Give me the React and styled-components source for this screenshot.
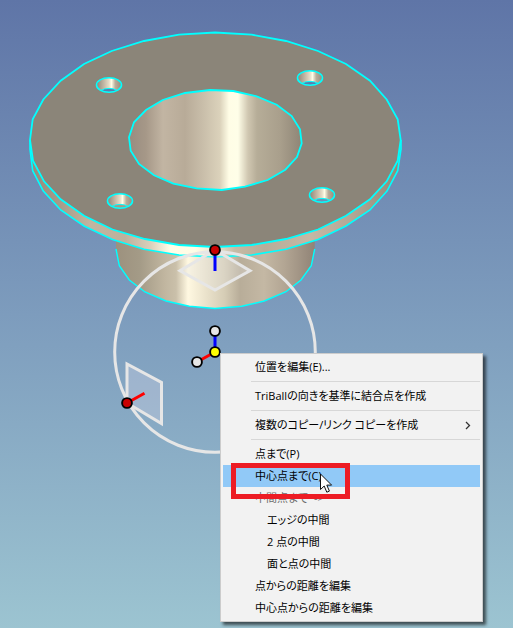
import React from 'react';
import styled, { createGlobalStyle } from 'styled-components';

const GlobalStyle = createGlobalStyle`
  body {
    margin: 0;
    font-family: 'Noto Sans CJK JP', sans-serif;
  }
`;

const Viewport = styled.main`
  position: relative;
  min-height: 100vh;
  overflow: hidden;
  background: linear-gradient(#5f75a7 0%, #7d9cbd 50%, #9cc4d1 100%);
`;

const Scene = styled.svg`
  display: block;
`;

const Menu = styled.div`
  position: absolute;
  left: 220px;
  top: 353px;
  box-sizing: border-box;
  min-width: 263px;
  padding: 2px;
  display: flex;
  flex-direction: column;
  background: #f2f2f2;
  border: 1px solid #cccccc;
  box-shadow: 3px 3px 3px rgba(0, 0, 0, 0.6);
`;

const Item = styled.button`
  display: flex;
  align-items: center;
  justify-content: space-between;
  height: 22px;
  padding: 0 9px 0 ${(p) => (p.$nested ? 44 : 32)}px;
  border: 0;
  background: ${(p) => (p.$active ? '#91c9f7' : 'transparent')};
  color: #000;
  font-family: 'Open Sans', 'Noto Sans CJK JP', sans-serif;
  font-size: 11px;
  line-height: 22px;
  font-feature-settings: 'palt';
  text-align: left;
  white-space: pre;

  &:disabled {
    color: #6d6d6d;
  }
`;

const Separator = styled.hr`
  height: 1px;
  margin: 3px 0 3px 28px;
  border: 0;
  background: #d7d7d7;
`;

const Callout = styled.div`
  position: absolute;
  left: 10px;
  top: 109px;
  box-sizing: border-box;
  width: 119px;
  height: 36px;
  border: 5px solid #ed1c24;
  pointer-events: none;
`;

const Pointer = styled.svg`
  position: absolute;
  left: 99px;
  top: 119px;
  pointer-events: none;
`;

const TOP_FACE =
  '215,32.5 251.7,34.7 286,41 318,51 346,64 370,80.7 386.7,99.5 397.7,119.3 400.7,140 397.7,160.7 386.7,181.3 370,199.3 346,215.7 318,229.5 286,239 251.7,245 215,247 179,245 145,239 112.5,229.5 84,215.7 60.7,199.3 44,181.3 33,160.7 30,140 32.7,119.3 43.3,99.5 60.7,80.7 84,64 111.7,51 144,41 179,34.7';
const RIM =
  '30,140 30,149.3 32.7,170.7 43.3,191 60.7,210 84,226 112.5,239.5 144,249.3 179,255 215,257 251.7,255 286,249.3 318,239.5 346,226 370,210 387,191 397.7,170.7 401,149.3 401,140';
const BORE =
  '129,137.3 134,122.3 146,110 162.7,100 185,93 210,90 233.3,91 256.7,96.3 276.7,104.7 291.7,116 300,129.3 301.7,143.3 297,157 285.3,169.7 267.7,180 245,186.7 221.7,190 196.7,188.3 173.3,183.7 154,175.3 139,164 130.7,150.7';
const BOSS =
  '116,249 119.3,265.7 129.3,280 145,292 166,301 189.3,306.3 215,308.5 241.7,306.3 264.3,301 286,291.7 301,280 311.3,265.7 314.7,249';

const GRADIENTS = [
  ['bore', 129, 302, [[129, '#988c80'], [146, '#a69888'], [163, '#c2b5a3'], [185, '#b8ab98'], [202, '#c8bda9'], [220, '#dbd2bb'], [229, '#fffde6'], [238, '#fffee8'], [248, '#d0c7b1'], [257, '#b6ad98'], [280, '#a99f8c'], [302, '#8e8576']]],
  ['boss', 116, 315, [[116, '#9c917e'], [140, '#a49b87'], [164, '#c0b59f'], [176, '#cac0aa'], [188, '#fff8e1'], [208, '#e8e0c9'], [225, '#d5ccb5'], [240, '#b8ad99'], [264, '#c4b8a4'], [285, '#b2a593'], [315, '#908376']]],
  ['rim', 30, 401, [[30, '#95897b'], [60, '#a79b89'], [90, '#c0b5a0'], [125, '#bdb19d'], [150, '#d8cfba'], [170, '#fffde7'], [195, '#fffce5'], [215, '#eee5d0'], [235, '#c5baa5'], [265, '#b8ad99'], [310, '#c5b8a5'], [350, '#b4a896'], [401, '#918777']]],
];

const HOLES = [
  { x: 109, y: 85, tint: '#5f7aac' },
  { x: 310, y: 78, tint: '#5f7aac' },
  { x: 120, y: 201, tint: '#a59b89' },
  { x: 322, y: 195, tint: '#7090b5' },
];

function Hole({ x, y, tint }) {
  return (
    <g transform={`translate(${x} ${y})`}>
      <ellipse rx="12.5" ry="7.2" fill="url(#hole)" />
      <path d="M-8 5.4 Q-5 3.4 0 3.4 Q5 3.4 8 5.4 Q5 7 0 7 Q-5 7 -8 5.4Z" fill={tint} />
      <path d="M-8 5.4 Q-5 3.4 0 3.4 Q5 3.4 8 5.4" fill="none" stroke="#0ff" strokeWidth="1" />
      <ellipse rx="12.5" ry="7.2" fill="none" stroke="#0ff" strokeWidth="1.6" />
    </g>
  );
}

function Handle({ x, y, color }) {
  return <circle cx={x} cy={y} r="4.9" fill={color} stroke="#000" strokeWidth="1.9" />;
}

function FlangeModel() {
  return (
    <Scene width="420" height="460" viewBox="0 0 420 460" role="img" aria-label="TriBall">
      <defs>
        {GRADIENTS.map(([id, from, to, stops]) => (
          <linearGradient key={id} id={id} gradientUnits="userSpaceOnUse" x1={from} x2={to} y1="0" y2="0">
            {stops.map(([x, color]) => (
              <stop key={x} offset={(x - from) / (to - from)} stopColor={color} />
            ))}
          </linearGradient>
        ))}
        <linearGradient id="hole">
          <stop offset="0" stopColor="#8e8478" />
          <stop offset=".3" stopColor="#c4b8a5" />
          <stop offset=".5" stopColor="#e5dcc7" />
          <stop offset=".6" stopColor="#fffde6" />
          <stop offset=".75" stopColor="#b9ae9b" />
          <stop offset="1" stopColor="#968b7b" />
        </linearGradient>
      </defs>
      <polygon points={`116,230 ${BOSS} 314.7,230`} fill="url(#boss)" />
      <polyline points={BOSS} fill="none" stroke="#0ff" strokeWidth="1.4" />
      <polygon points={RIM} fill="url(#rim)" />
      <polyline points={RIM} fill="none" stroke="#0ff" strokeWidth="1.6" />
      <polygon points={TOP_FACE} fill="#8b8579" stroke="#0ff" strokeWidth="1.8" />
      <polygon points={BORE} fill="url(#bore)" stroke="#0ff" strokeWidth="1.8" />
      {HOLES.map((h) => <Hole key={h.x} {...h} />)}
      <g stroke="#e6e6e6" strokeWidth="3">
        <circle cx="215" cy="352" r="100.3" fill="none" />
        <path d="M215 250 L250 270.7 L215 290 L180 270.7Z" fill="#e6e6e6" fillOpacity=".3" />
        <path d="M127 403 V364 L161.5 382.5 V423.5Z" fill="#c8cee2" fillOpacity=".4" />
      </g>
      <g fill="none" strokeWidth="3">
        <path d="M215 250 V271 M215 331 V352" stroke="#00f" />
        <path d="M127 403 L144.5 393.3 M197 362 L215 352" stroke="#f00" />
      </g>
      <Handle x={215} y={250} color="#c80000" />
      <Handle x={215} y={331} color="#e6e6e6" />
      <Handle x={197} y={362} color="#e6e6e6" />
      <Handle x={215} y={352} color="#ff0" />
      <Handle x={127} y={403} color="#c80000" />
    </Scene>
  );
}

const ITEMS = [
  { label: '位置を編集(E)...' },
  { separator: true },
  { label: 'TriBallの向きを基準に結合点を作成' },
  { separator: true },
  { label: '複数のコピー/リンク コピーを作成', submenu: true },
  { separator: true },
  { label: '点まで(P)' },
  { label: '中心点まで(C)', active: true },
  { label: '中間点まで  ->', disabled: true },
  { label: 'エッジの中間', nested: true },
  { label: '2 点の中間', nested: true },
  { label: '面と点の中間', nested: true },
  { label: '点からの距離を編集' },
  { label: '中心点からの距離を編集' },
];

export default function App() {
  return (
    <>
      <GlobalStyle />
      <Viewport>
        <FlangeModel />
        <Menu role="menu">
          {ITEMS.map((item, i) =>
            item.separator ? (
              <Separator key={i} />
            ) : (
              <Item
                key={i}
                type="button"
                role="menuitem"
                aria-haspopup={item.submenu ? 'menu' : undefined}
                disabled={item.disabled}
                $nested={item.nested}
                $active={item.active}
              >
                {item.label}
                {item.submenu && (
                  <svg width="6" height="9" viewBox="0 0 6 9" aria-hidden="true">
                    <path d="M1 1 L4.5 4.5 L1 8" fill="none" stroke="#333" strokeWidth="1.3" />
                  </svg>
                )}
              </Item>
            )
          )}
          <Callout />
          <Pointer width="13" height="21" viewBox="0 0 13 21" aria-hidden="true">
            <path
              d="M.5 1 V16.5 L4.2 13 L6.8 19.2 L9.4 18.1 L6.8 12.1 H11.6Z"
              fill="#fff"
              stroke="#111"
              strokeWidth="1"
            />
          </Pointer>
        </Menu>
      </Viewport>
    </>
  );
}
